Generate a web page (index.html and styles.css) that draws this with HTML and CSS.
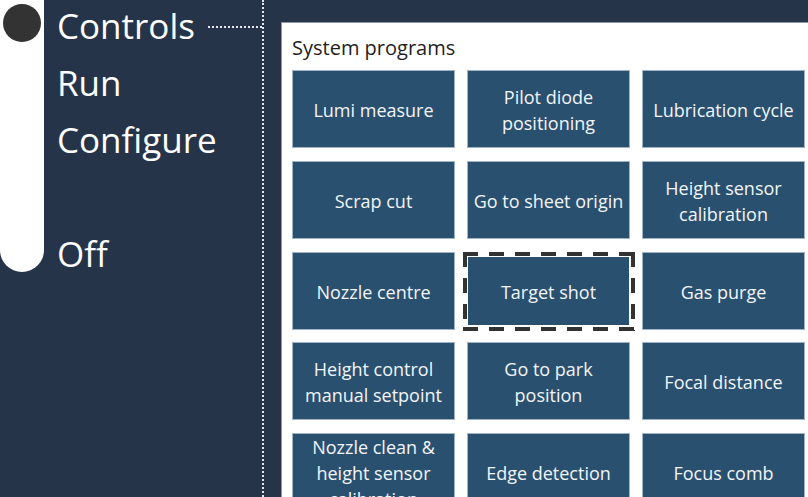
FILE: index.html
```html
<!DOCTYPE html>
<html lang="en">
<head>
<meta charset="utf-8">
<title>Controls</title>
<link rel="stylesheet" href="styles.css">
</head>
<body>
<div class="app">
  <aside class="nav">
    <div class="track"><div class="knob"></div></div>
    <ul class="menu">
      <li class="item active"><span>Controls</span><span class="leader"></span></li>
      <li class="item"><span>Run</span></li>
      <li class="item"><span>Configure</span></li>
      <li class="item spacer"></li>
      <li class="item"><span>Off</span></li>
    </ul>
    <div class="vline"></div>
  </aside>
  <main class="panel">
    <h2 class="title">System programs</h2>
    <div class="grid">
      <button class="prog">Lumi measure</button>
      <button class="prog">Pilot diode<br>positioning</button>
      <button class="prog">Lubrication cycle</button>
      <button class="prog">Scrap cut</button>
      <button class="prog">Go to sheet origin</button>
      <button class="prog">Height sensor<br>calibration</button>
      <button class="prog">Nozzle centre</button>
      <div class="cell focus-ring"><button class="prog focused">Target shot</button></div>
      <button class="prog">Gas purge</button>
      <button class="prog">Height control<br>manual setpoint</button>
      <button class="prog">Go to park<br>position</button>
      <button class="prog">Focal distance</button>
      <button class="prog">Nozzle clean &amp;<br>height sensor<br>calibration</button>
      <button class="prog">Edge detection</button>
      <button class="prog">Focus comb</button>
    </div>
  </main>
</div>
</body>
</html>
```

FILE: styles.css
```css
html, body {
  margin: 0;
  padding: 0;
  height: 100%;
  overflow: hidden;
}
body {
  background: #263449;
  font-family: "Open Sans", "Noto Sans", sans-serif;
  color: #ffffff;
}
.app {
  display: flex;
  height: 100vh;
}
.nav {
  display: flex;
  width: 281px;
  flex: none;
}
.track {
  width: 44px;
  height: 272px;
  flex: none;
  background: #ffffff;
  border-radius: 0 0 22px 22px;
  box-sizing: border-box;
  padding: 4px 0 0 3px;
}
.knob {
  width: 38px;
  height: 38px;
  border-radius: 50%;
  background: #333333;
}
.menu {
  list-style: none;
  margin: -3px 0 0 13px;
  padding: 0;
  flex: 1;
}
.item {
  display: flex;
  font-size: 35px;
  line-height: 57px;
  height: 57px;
  color: #ffffff;
}
.leader {
  flex: 1;
  align-self: flex-start;
  margin: 29px 0 0 13px;
  border-top: 2px dotted #e6eaf0;
}
.vline {
  width: 0;
  border-left: 2px dotted #e6eaf0;
  height: 100%;
  margin-right: 17px;
}
.panel {
  flex: 1;
  margin-top: 22px;
  background: #ffffff;
  border-top: 1px solid #8d97a4;
  border-left: 1px solid #8d97a4;
  padding: 11px 0 0 10px;
  overflow: hidden;
}
.title {
  margin: 0 0 9px 0;
  font-size: 20px;
  line-height: 27px;
  font-weight: 400;
  color: #1e1e1e;
}
.grid {
  display: grid;
  grid-template-columns: repeat(3, 163px);
  grid-auto-rows: 78px;
  column-gap: 12px;
  row-gap: 12.75px;
}
.prog {
  display: flex;
  align-items: center;
  justify-content: center;
  box-sizing: border-box;
  margin: 0;
  padding: 2px 0 0 0;
  background: #2a5070;
  border: 1px solid #9fb2c6;
  color: #f2f5f8;
  font-family: "Open Sans", "Noto Sans", sans-serif;
  font-size: 18px;
  line-height: 26px;
  text-align: center;
  white-space: nowrap;
  overflow: visible;
}
.cell {
  display: flex;
  position: relative;
}
.cell .prog {
  flex: 1;
}
.prog.focused {
  margin: 5px 1px;
  border-color: #2a5070;
  outline: none;
}
.focus-ring::after {
  content: "";
  position: absolute;
  top: 0;
  right: -5px;
  bottom: -1px;
  left: -4px;
  pointer-events: none;
  background:
    repeating-linear-gradient(90deg, #333333 0 15px, transparent 15px 26px) left top / 100% 4px no-repeat,
    repeating-linear-gradient(90deg, #333333 0 15px, transparent 15px 26px) left bottom / 100% 4px no-repeat,
    repeating-linear-gradient(180deg, #333333 0 15px, transparent 15px 26px) left top / 4px 100% no-repeat,
    repeating-linear-gradient(180deg, #333333 0 15px, transparent 15px 26px) right top / 4px 100% no-repeat;
}
```
